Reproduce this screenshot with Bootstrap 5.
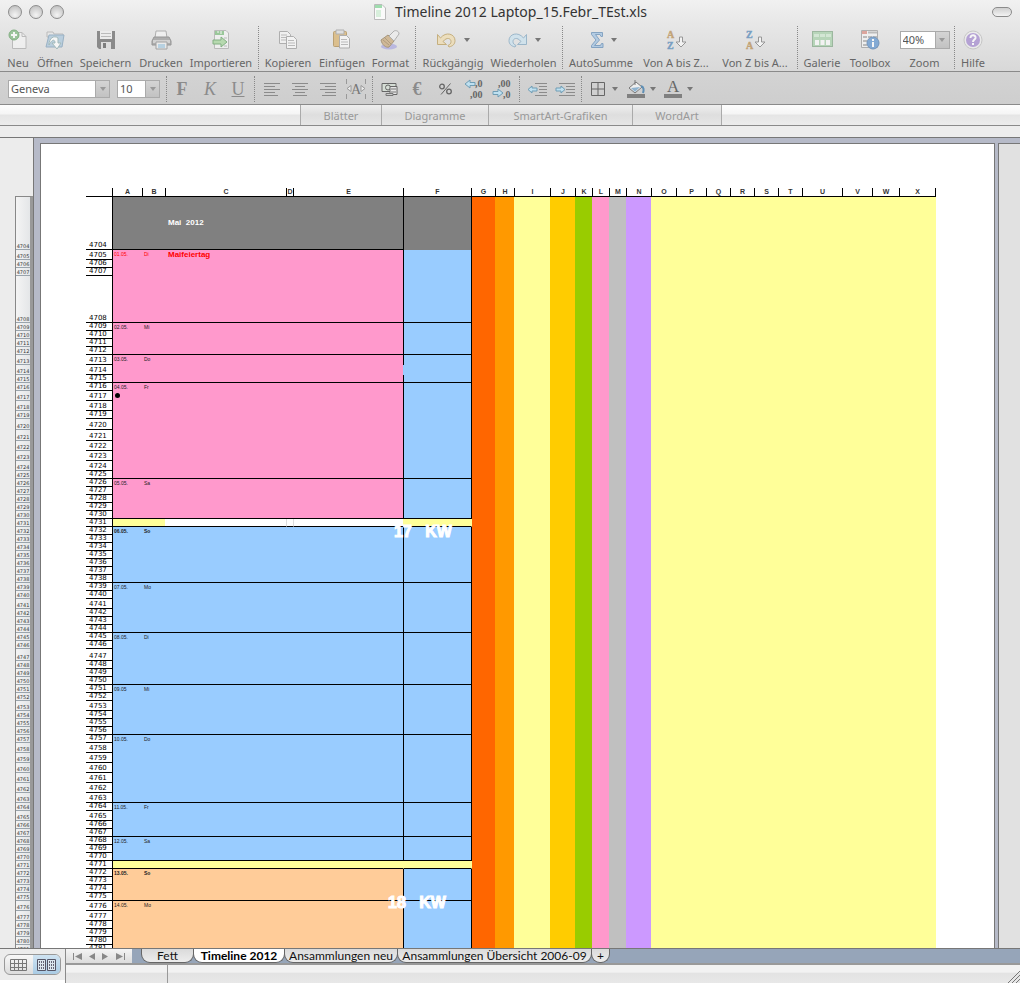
<!DOCTYPE html>
<html lang="de">
<head>
<meta charset="utf-8">
<meta name="viewport" content="width=device-width, initial-scale=1">
<title>Timeline 2012 Laptop_15.Febr_TEst.xls</title>
<link rel="stylesheet" href="https://cdn.jsdelivr.net/npm/bootstrap@5.3.0/dist/css/bootstrap.min.css">
<style>
body{font-family:"Noto Sans","Open Sans",sans-serif;font-size:11px;line-height:14px;color:#555;background:#ececec;overflow:hidden}
button{background:none;border:0;padding:0;color:inherit;font:inherit}
svg{display:block;overflow:visible}
.topbar{background:linear-gradient(#f1f1f1,#e8e8e8 30%,#d8d8d8);border-bottom:1px solid #8a8a8a;height:72px}
.titlebar{height:23px;padding:0 8px}
.light{width:14px;height:14px;border-radius:7px;border:1px solid #8d8d8d;background:radial-gradient(circle at 50% 75%,#f4f4f4,#b9b9b9)}
.pill{width:20px;height:10px;border-radius:5px;border:1px solid #8b8b8b;background:linear-gradient(#cfcfcf,#f3f3f3)}
.doc-title{font-size:14px;color:#333}
.tools{display:grid;height:48px;justify-content:start;
grid-template-columns:36px 38px 63px 48px 72px 3px 56px 52px 45px 4px 72px 69px 8px 70px 80px 78px 6px 44px 52px 57px 3px 34px}
.tool{display:flex;flex-direction:column;align-items:center;white-space:nowrap;color:#666}
.tool .pic{height:33px;display:flex;align-items:center;gap:7px}
.tool .pic svg{opacity:.7}
.split{justify-self:center;border-left:1px dotted #888;width:1px}
.tools .split{height:43px;margin-top:3px}
.arrow{border:3px solid transparent;border-top:4px solid #777;border-bottom:0;width:0;height:0;flex:none}
.formats{height:33px;background:linear-gradient(#d3d3d3,#cecece);border-bottom:1px solid #8a8a8a;padding:2px 0 0 8px;gap:7px}
.combo{display:flex;height:18px;border:1px solid #aaa}
.combo input{border:0;padding:0 2px;min-width:0;font-size:11px;line-height:16px;color:#555;background:#fff;border-radius:0}
.combo button{width:14px;background:linear-gradient(#d4d4d4,#c2c2c2);border-left:1px solid #aaa;display:flex;align-items:center;justify-content:center;flex:none}
.combo .arrow{border-top-color:#999}
.family{width:102px}.size{width:43px}.zoomer{width:50px}
.fbtns{display:grid;align-items:center;grid-template-columns:4px 28px 28px 28px 5px 29px 28px 28px 28px 5px 28px 28px 28px 29px 28px 7px 28px 28px 5px 28px 10px 28px 9px 28px 9px;height:30px;margin-left:-3px}
.fbtns button{display:flex;justify-content:center;align-items:center}
.fbtns .split{height:26px}
.letter{font-family:"Liberation Serif",serif;font-size:18px;line-height:20px;color:#8b8b8b}
.ribbon{height:21px;background:linear-gradient(#fdfdfd 0,#f5f5f5 45%,#e5e5e5 50%,#ececec);border-bottom:1px solid #8a8a8a;padding-left:300px}
.ribbon a{display:block;color:#999;text-decoration:none;text-align:center;line-height:21px;border-left:1px solid #aaa;background:linear-gradient(#eee,#dedede 50%,#e6e6e6)}
.ribbon a:last-child{border-right:1px solid #aaa}
.r1{width:81px}.r2{width:107px}.r3{width:144px}.r4{width:90px}
.strip{height:11px;background:#ededed}
.work{border-top:1px solid #777;min-height:0}
.gutter{width:34px;background:#ececec;border-right:1px solid #777;padding:59px 0 0 15px}
.scale{width:18px;border:1px solid #888;border-right:3px solid #999;background:linear-gradient(90deg,#f4f4f4,#e4e6e8);margin-top:-1px;padding:0}
.scale div{border-bottom:1px solid #9aa4ac;display:flex;align-items:flex-end;justify-content:center;font:5px/6px "DejaVu Sans",sans-serif;color:#333}
.desk{background:#b6bac8;padding:5px 0 0 6px;gap:3px;min-width:0}
.paper{background:#fff;border:1px solid #777;border-bottom:0;padding:44px 0 0 45px;overflow:hidden;min-width:0}
.nextpaper{width:22px;background:#e1e1e1;border:1px solid #777;border-bottom:0;border-right:0;flex:none}
.sheet{border-collapse:separate;border-spacing:0;table-layout:fixed;width:850px;color:#222}
.sheet th,.sheet td{padding:0;line-height:7px;overflow:hidden;white-space:nowrap}
.sheet thead th{height:9px;font:700 7px/8px "Liberation Sans",sans-serif;text-align:center;border-bottom:1px solid #000;border-left:1px solid #000;color:#333}
.sheet thead td{border-bottom:1px solid #000}
.sheet thead th.fcol,.sheet thead th:last-child{border-right:1px solid #000}
.sheet thead th.gcol{border-left:0}
.sheet tbody th{font:400 7px/7px "DejaVu Sans",sans-serif;vertical-align:bottom;border-bottom:1px solid #000;padding-left:3px;color:#000}
.sheet tbody td{vertical-align:top;font:400 5px/8px "Liberation Sans",sans-serif;padding-left:1px}
.sheet tbody td.day{padding-left:2px}
.sheet tbody td.date{border-left:1px solid #000}
.sheet tbody td.fcol{border-left:1px solid #000;border-right:1px solid #000;position:relative;overflow:visible}
.sheet tbody td.ruled{border-bottom:1px solid #000}
.sheet tbody td.open{border-left-color:transparent}
.sheet tbody td.gap{border-left-color:transparent;border-right-color:transparent}
.sheet tbody td.hair{border-left:1px solid #ddd}
.sheet tbody td.note{padding-left:3px;font:700 8px/10px "Liberation Sans",sans-serif}
.grey{background:#808080}.pink{background:#f9c}.sky{background:#9cf}.peach{background:#fc9}.lemon{background:#ff9}
.flame{background:#f60}.orange{background:#f90}.gold{background:#fc0}.leaf{background:#9c0}.silver{background:#c0c0c0}.violet{background:#c9f}
.sheet tbody td.note.head{color:#fff;vertical-align:middle}
.holiday,.sheet tbody td.holiday{color:#f00}
.sunday{font-weight:700!important}
.dot{display:block;width:5px;height:5px;border-radius:3px;background:#000;margin:2px 0 0 1px}
.week{position:absolute;z-index:2;left:-10px;top:4px;font:700 16px/18px "Liberation Sans",sans-serif;color:#fff;-webkit-text-stroke:1px #fff;white-space:pre}
.week.low{left:-16px;top:1px}
.foot{height:35px;border-top:1px solid #777}
.views{width:66px;border-right:1px solid #8a8a8a;background:linear-gradient(#ececec 90%,#fff 90%);padding:5px 0 0 4px}
.viewpill{display:flex;width:57px;height:21px;border:1px solid #999;border-radius:6px;overflow:hidden;background:linear-gradient(#f8f8f8,#dcdcdc)}
.viewpill button{flex:1;display:flex;align-items:center;justify-content:center}
.viewpill .on{background:linear-gradient(#cfe3f2,#a9cbe4)}
.sheets{height:16px;background:#96a5b9;border-bottom:2px solid #999}
.steps{width:66px;background:linear-gradient(#f4f4f4,#dcdcdc);display:flex;align-items:center;justify-content:space-around;padding:0 4px;margin-right:9px}
.steps button{color:#888;line-height:10px}
.tab{display:block;height:14px;border-radius:0 0 9px 9px;border:1px solid #666;border-top:0;background:linear-gradient(#dadada,#ededed);color:#111;text-decoration:none;text-align:center;font:400 12px/13px Lato,sans-serif;margin-right:-1px;white-space:nowrap}
.tab.active{background:#fff;font-weight:700;color:#000;position:relative}
.t1{width:53px}.t2{width:92px}.t3{width:114px}.t4{width:195px}.t5{width:19px}
.status{background:linear-gradient(#f2f2f2 40%,#e3e3e3 45%,#e8e8e8)}
.status .cell{width:102px;border-right:1px solid #999}
</style>
</head>
<body class="vh-100 d-flex flex-column">
<header class="topbar">
  <div class="titlebar d-flex align-items-center">
    <div class="d-flex col" style="gap:7px"><span class="light"></span><span class="light"></span><span class="light"></span></div>
    <div class="doc-title d-flex align-items-center gap-2">
      <svg width="14" height="18" viewBox="0 0 14 18"><path d="M1.500 1.500H9L12.500 5v11.500h-11z" fill="#fafafa" stroke="#bbb"/><path d="M2 2h7v3H2z" fill="#9fdcae"/><path d="M3 7h5v7H3z" fill="#d8efdc"/></svg>
      <span>Timeline 2012 Laptop_15.Febr_TEst.xls</span>
    </div>
    <div class="col d-flex justify-content-end"><span class="pill"></span></div>
  </div>
  <nav class="tools" aria-label="Standard">
    <button class="tool"><span class="pic"><svg width="20" height="22" viewBox="0 0 20 22"><path d="M4.500 3.500H14l4 4v12H4.500z" fill="#f5f5f5" stroke="#aaa"/><path d="M14 3.500v4h4" fill="none" stroke="#aaa"/><circle cx="6" cy="6" r="5" fill="#7fb87f" stroke="#5c9b5c"/><path d="M6 3v6M3 6h6" stroke="#fff" stroke-width="2"/></svg></span>Neu</button>
    <button class="tool"><span class="pic"><svg width="21" height="22" viewBox="0 0 21 22"><path d="M2 3h6l1 2h9v3H2z" fill="#e8e8e8" stroke="#aaa"/><path d="M1 18L4 6h15l-2 12z" fill="#a9c6dc" stroke="#7b9db8"/><path d="M4 16C4 9 9 6 13 9v5h3l-4 6-5-6h3c0-4-3-4-6 2z" fill="#fff" stroke="#8aa"/></svg></span>Öffnen</button>
    <button class="tool"><span class="pic"><svg width="20" height="20" viewBox="0 0 20 20"><path d="M1 1h18v18H3l-2-2z" fill="#666"/><path d="M4 1h12v8H4z" fill="#f0f0f0"/><path d="M5 3.500h10M5 6.500h10" stroke="#aaa"/><path d="M5 12h10v7H5z" fill="#ddd"/><path d="M7 13h3v5H7z" fill="#555"/></svg></span>Speichern</button>
    <button class="tool"><span class="pic"><svg width="21" height="20" viewBox="0 0 21 20"><path d="M5 1h10l1 7H4z" fill="#f4f4f4" stroke="#999"/><path d="M3 7h15l2 4v4H1v-4z" fill="#999" stroke="#777"/><path d="M2 10h17v3H2z" fill="#ccc"/><path d="M5 12h11v7H5z" fill="#eee" stroke="#888"/><path d="M7 14h7v4H7z" fill="#a7cbe2"/></svg></span>Drucken</button>
    <button class="tool"><span class="pic"><svg width="18" height="21" viewBox="0 0 18 21"><path d="M2.500 1.500H14l2.500 2.500v15.500h-14z" fill="#f4f4f4" stroke="#aaa"/><path d="M3 2h9v4H3z" fill="#7cbc7c"/><path d="M6 2v2M9 2v3" stroke="#fff"/><path d="M1 11h8V8l6 5-6 5v-3H1z" fill="#a5d69a" stroke="#5c9b5c"/><path d="M12 9h3M12 17h3" stroke="#aaa"/></svg></span>Importieren</button>
    <i class="split"></i>
    <button class="tool"><span class="pic"><svg width="20" height="20" viewBox="0 0 20 20"><path d="M1.500 1.500h8l3 3v9h-11z" fill="#f6f6f6" stroke="#999"/><path d="M3 5h6M3 7.500h6M3 10h5" stroke="#aaa"/><path d="M8.500 6.500h7l3 3v9h-10z" fill="#fafafa" stroke="#999"/><path d="M10 10.500h6M10 13h7M10 15.500h7" stroke="#aaa"/></svg></span>Kopieren</button>
    <button class="tool"><span class="pic"><svg width="20" height="21" viewBox="0 0 20 21"><rect x="1.500" y="2.500" width="13" height="15" rx="1" fill="#d9b16a" stroke="#a98545"/><path d="M4 1h8v4H4z" fill="#ddd" stroke="#999"/><path d="M7.500 6.500h7l3 3v9.500h-10z" fill="#fafafa" stroke="#999"/><path d="M9 10.500h6M9 13h7M9 15.500h7" stroke="#aaa"/></svg></span>Einfügen</button>
    <button class="tool"><span class="pic"><svg width="21" height="20" viewBox="0 0 21 20"><ellipse cx="9" cy="16.500" rx="8" ry="3" fill="#aaa8e0"/><path d="M1 10l7-5 6 6-5 6c-3 1-7-2-8-7z" fill="#c9a878" stroke="#8e7650"/><path d="M3 10l6 5M5 8l6 6" stroke="#9b7f55"/><path d="M9 6l5-5c2-1 5 0 5 3l-5 7z" fill="#eee" stroke="#999"/></svg></span>Format</button>
    <i class="split"></i>
    <button class="tool"><span class="pic"><svg width="21" height="16" viewBox="0 0 21 16"><path d="M1.500 2.500v10h9L7 9.500c4-5 8-3 8 0 0 2-1 3-3 4l1 1.500c4-1 6-3 6-6.500C19 2 10-1 4.500 6z" fill="#f0dcae" stroke="#b99a55"/></svg><i class="arrow"></i></span>Rückgängig</button>
    <button class="tool"><span class="pic"><svg width="21" height="16" viewBox="0 0 21 16"><path d="M19.500 2.500v10h-9L14 9.500c-4-5-8-3-8 0 0 2 1 3 3 4L8 15c-4-1-6-3-6-6.500C2 2 11-1 16.500 6z" fill="#c9e2f0" stroke="#7da4bf"/></svg><i class="arrow"></i></span>Wiederholen</button>
    <i class="split"></i>
    <button class="tool"><span class="pic ps-1"><svg width="14" height="18" viewBox="0 0 14 18"><path d="M1.500 1.500h11v4h-1.500l-1-2H5.500L9.500 9l-5 5.500h6l1-2H13v4H1.500v-2L6 9 1.500 3.500z" fill="#9fc2e3" stroke="#5d89b5"/></svg><i class="arrow"></i></span>AutoSumme</button>
    <button class="tool"><span class="pic"><svg width="21" height="22" viewBox="0 0 21 22"><g font-family="Liberation Serif,serif" font-weight="700" font-size="10" stroke-width=".4"><text x="1" y="9" fill="#b5894a" stroke="#b5894a">A</text><text x="1" y="20" fill="#4b82b5" stroke="#4b82b5">Z</text></g><path d="M13.500 8h3v5h3.500l-5 5-5-5h3.500z" fill="#fafafa" stroke="#777"/></svg></span>Von A bis Z...</button>
    <button class="tool"><span class="pic"><svg width="21" height="22" viewBox="0 0 21 22"><g font-family="Liberation Serif,serif" font-weight="700" font-size="10" stroke-width=".4"><text x="1" y="9" fill="#4b82b5" stroke="#4b82b5">Z</text><text x="1" y="20" fill="#b5894a" stroke="#b5894a">A</text></g><path d="M13.500 8h3v5h3.500l-5 5-5-5h3.500z" fill="#fafafa" stroke="#777"/></svg></span>Von Z bis A...</button>
    <i class="split"></i>
    <button class="tool"><span class="pic"><svg width="21" height="18" viewBox="0 0 21 18"><rect x=".5" y=".5" width="20" height="15" fill="#a5d0a8" stroke="#7fa583"/><path d="M2 3h5v3H2zM8 3h5v3H8zM14 3h5v3h-5z" fill="#cde8cf"/><path d="M3 9h4v5H3zM8.500 9h4v5h-4zM14 9h4v5h-4z" fill="#fafafa"/></svg></span>Galerie</button>
    <button class="tool"><span class="pic"><svg width="20" height="21" viewBox="0 0 20 21"><path d="M1.500 1.500h16v17h-16z" fill="#f4f4f4" stroke="#999"/><path d="M2 2h5v3H2z" fill="#d98b80"/><path d="M8 3.500h9M3 8h4M8 8h4M13 8h4M3 12h4M3 16h4" stroke="#aaa" stroke-width="2"/><circle cx="13" cy="14" r="6" fill="#5c93cf" stroke="#4676ac"/><path d="M13 10v2M13 13v5" stroke="#fff" stroke-width="2"/></svg></span>Toolbox</button>
    <div class="tool"><span class="pic"><span class="combo zoomer"><input class="w-100" id="zoom" value="40%"><button aria-label="Zoomstufen"><i class="arrow"></i></button></span></span><label for="zoom">Zoom</label></div>
    <i class="split"></i>
    <button class="tool"><span class="pic"><svg width="20" height="20" viewBox="0 0 20 20"><circle cx="10" cy="10" r="9" fill="#eee" stroke="#bbb"/><circle cx="10" cy="10" r="7" fill="#a287cf"/><path d="M7.500 8c0-4 5.500-3.500 5 0-.3 1.500-2.500 1.800-2.500 4M10 13v2" fill="none" stroke="#fff" stroke-width="2"/></svg></span>Hilfe</button>
  </nav>
</header>

<div class="formats d-flex align-items-center">
  <div class="combo family"><input class="w-100" aria-label="Schriftart" value="Geneva"><button aria-label="Schriftarten"><i class="arrow"></i></button></div>
  <div class="combo size"><input class="w-100" aria-label="Schriftgrad" value="10"><button aria-label="Schriftgrade"><i class="arrow"></i></button></div>
  <div class="fbtns">
    <i class="split"></i>
    <button class="letter fw-bold">F</button>
    <button class="letter fst-italic">K</button>
    <button class="letter text-decoration-underline">U</button>
    <i class="split"></i>
    <button aria-label="Links"><svg width="16" height="15"><path d="M0 1.500h16M0 4.500h11M0 7.500h16M0 10.500h11M0 13.500h14" stroke="#8b8b8b"/></svg></button>
    <button aria-label="Zentriert"><svg width="16" height="15"><path d="M0 1.500h16M3 4.500h10M0 7.500h16M3 10.500h10M1 13.500h14" stroke="#8b8b8b"/></svg></button>
    <button aria-label="Rechts"><svg width="16" height="15"><path d="M0 1.500h16M5 4.500h11M0 7.500h16M5 10.500h11M2 13.500h14" stroke="#8b8b8b"/></svg></button>
    <button aria-label="Verbinden"><svg width="20" height="20" viewBox="0 0 20 20"><path d="M.5 0v5M.5 15v5M19.500 0v5M19.500 15v5" stroke="#999"/><path d="M1 9.500l4-3v6zM19 9.500l-4-3v6z" fill="#eee" stroke="#999"/><text x="5" y="15" font-family="Liberation Serif,serif" font-size="14" fill="#777">A</text></svg></button>
    <i class="split"></i>
    <button aria-label="Währung"><svg width="17" height="15" viewBox="0 0 17 15"><path d="M1 1.500h14v8H1z" fill="#d5ddd5" stroke="#666"/><circle cx="7" cy="5.500" r="2.500" fill="none" stroke="#666"/><path d="M9 4.500h7v8H9z" fill="#e5e5e5" stroke="#666"/><path d="M10 7h5M10 10h5M5 11.500h7v2H5z" stroke="#777" fill="#ccc"/></svg></button>
    <button class="letter fw-bold">€</button>
    <button aria-label="Prozent"><svg width="13" height="12" viewBox="0 0 13 12"><path d="M11.500.5L2 11.500" stroke="#666"/><circle cx="3" cy="3.500" r="2.300" fill="none" stroke="#666" stroke-width="1.300"/><circle cx="10" cy="8.500" r="2.300" fill="none" stroke="#666" stroke-width="1.300"/></svg></button>
    <button aria-label="Dezimalstelle hinzufügen"><svg width="20" height="20" viewBox="0 0 20 20"><path d="M1 5l5-4v2.500h5v3H6V9z" fill="#bfe0f0" stroke="#6f9db5"/><g font-family="Liberation Serif,serif" font-size="10" font-weight="700" fill="#666"><text x="11" y="8">,0</text><text x="6" y="19">,00</text></g></svg></button>
    <button aria-label="Dezimalstelle löschen"><svg width="20" height="20" viewBox="0 0 20 20"><path d="M11 14l-5-4v2.500H1v3h5V18z" fill="#bfe0f0" stroke="#6f9db5"/><g font-family="Liberation Serif,serif" font-size="10" font-weight="700" fill="#666"><text x="6" y="8">,00</text><text x="11" y="19">,0</text></g></svg></button>
    <i class="split"></i>
    <button aria-label="Einzug verkleinern"><svg width="21" height="15"><path d="M8 1.500h12M12 4.500h8M12 7.500h8M12 10.500h8M8 13.500h12" stroke="#8b8b8b"/><path d="M1 7.500l4-3.500v2h5v3H5v2z" fill="#bfe0f0" stroke="#6f9db5"/></svg></button>
    <button aria-label="Einzug vergrößern"><svg width="21" height="15"><path d="M4 1.500h16M11 4.500h9M11 7.500h9M11 10.500h9M4 13.500h16" stroke="#8b8b8b"/><path d="M10 7.500L6 4v2H1v3h5v2z" fill="#bfe0f0" stroke="#6f9db5"/></svg></button>
    <i class="split"></i>
    <button aria-label="Rahmen"><svg width="14" height="14"><path d="M.5 .5h13v13H.5zM7 0v14M0 7h14" fill="none" stroke="#666"/></svg></button>
    <i class="arrow"></i>
    <button aria-label="Füllfarbe"><svg width="18" height="18" viewBox="0 0 18 18"><path d="M0 14h18v4H0z" fill="#808080"/><path d="M2 8l7-6 6 5-7 6z" fill="#eee" stroke="#777"/><path d="M4 8l9-1-5 5z" fill="#8fb3cf"/><path d="M14 6c3 1 3 4 2 7" fill="none" stroke="#5f8fb5" stroke-width="2"/><path d="M8 0v5" stroke="#777"/></svg></button>
    <i class="arrow"></i>
    <button aria-label="Schriftfarbe"><svg width="18" height="18" viewBox="0 0 18 18"><path d="M0 14h18v4H0z" fill="#808080"/><text x="3" y="12" font-family="Liberation Serif,serif" font-size="17" fill="#666">A</text></svg></button>
    <i class="arrow"></i>
  </div>
</div>
<nav class="ribbon d-flex" aria-label="Elemente">
  <a class="r1" href="#">Blätter</a><a class="r2" href="#">Diagramme</a><a class="r3" href="#">SmartArt-Grafiken</a><a class="r4" href="#">WordArt</a>
</nav>
<div class="strip"></div>

<main class="work d-flex flex-grow-1 overflow-hidden">
  <div class="gutter flex-shrink-0"><div class="scale" id="scale"></div></div>
  <div class="desk d-flex flex-grow-1">
    <div class="paper flex-grow-1">
      <table class="sheet"><colgroup id="cols"></colgroup><thead><tr id="letters"></tr></thead><tbody id="rows"></tbody></table>
    </div>
    <div class="nextpaper"></div>
  </div>
</main>

<footer class="foot d-flex flex-shrink-0">
  <div class="views flex-shrink-0"><div class="viewpill">
    <button aria-label="Normal"><svg width="17" height="12"><path d="M.5 .5h16v11H.5zM4.500 0v12M8.500 0v12M12.500 0v12M0 4.500h17M0 8.500h17" fill="none" stroke="#777"/></svg></button>
    <button class="on" aria-label="Seitenlayout"><svg width="19" height="12"><path d="M.5 .5h8v11h-8zM10.500 .5h8v11h-8z" fill="#dbe6ee" stroke="#556"/><path d="M2 3h5M2 6h5M2 9h5M12 3h5M12 6h5M12 9h5" stroke="#667" stroke-dasharray="1 1" stroke-width="2"/></svg></button>
  </div></div>
  <div class="d-flex flex-column flex-grow-1">
    <nav class="sheets d-flex" aria-label="Blätter">
      <div class="steps">
        <button aria-label="Erstes Blatt"><svg width="9" height="7"><path d="M9 0v7L2 3.500z" fill="#888"/><path d="M.5 0v7" stroke="#888"/></svg></button>
        <button aria-label="Vorheriges Blatt"><svg width="7" height="7"><path d="M6 0v7L0 3.500z" fill="#888"/></svg></button>
        <button aria-label="Nächstes Blatt"><svg width="7" height="7"><path d="M0 0v7l6-3.500z" fill="#888"/></svg></button>
        <button aria-label="Letztes Blatt"><svg width="9" height="7"><path d="M0 0v7l7-3.500z" fill="#888"/><path d="M8.500 0v7" stroke="#888"/></svg></button>
      </div>
      <a class="tab t1" href="#">Fett</a><a class="tab t2 active" href="#">Timeline 2012</a><a class="tab t3" href="#">Ansammlungen neu</a><a class="tab t4" href="#">Ansammlungen Übersicht 2006-09</a><a class="tab t5" href="#">+</a>
    </nav>
    <div class="status d-flex flex-grow-1"><div class="cell"></div>
      <svg class="ms-auto mt-auto" width="13" height="13"><path d="M1 13L13 1M5 13l8-8M9 13l4-4" stroke="#777"/></svg></div>
  </div>
</footer>

<script src="https://cdn.jsdelivr.net/npm/bootstrap@5.3.0/dist/js/bootstrap.bundle.min.js"></script>
<script>
const columns = {'':26,A:30,B:23,C:121,D:7,E:110,F:69,G:23,H:19,I:36,J:25,K:17,L:17,M:17,N:25,O:25,P:30,Q:24,R:24,S:24,T:24,U:40,V:30,W:27,X:37};
const first = 4704;
const heights = [53,10,8,8,47,8,8,8,8,10,10,8,8,10,10,8,11,11,10,10,10,8,8,8,8,8,8,8,8,8,8,8,8,8,8,8,8,
  10,8,8,8,8,8,12,8,8,8,8,8,10,8,8,8,8,10,10,10,10,10,10,8,10,8,8,8,8,8,8,8,8,8,8,10,10,8,8,8,8,8,8];
const days = {4705:['01.05.','Di'],4709:['02.05.','Mi'],4713:['03.05.','Do'],4716:['04.05.','Fr'],4726:['05.05.','Sa'],4732:['06.05.','So'],
  4739:['07.05.','Mo'],4745:['08.05.','Di'],4751:['09.05','Mi'],4757:['10.05.','Do'],4764:['11.05.','Fr'],4768:['12.05.','Sa'],4772:['13.05.','So'],4776:['14.05.','Mo']};
const ruled = new Set([4704,4708,4712,4715,4725,4730,4731,4738,4744,4750,4756,4763,4767,4770,4771,4775]);
const notes = {4704:'Mai&nbsp; 2012',4705:'Maifeiertag'};
const weeks = {4731:'<span class="week">17   KW</span>',4775:'<span class="week low">18   KW</span>'};
const bands = ['flame','orange','lemon','gold','leaf','pink','silver','violet'];
const fill = n => n === 4704 ? 'grey' : n < 4731 ? 'pink' : n < 4771 ? 'sky' : n === 4771 ? 'lemon' : 'peach';

document.getElementById('cols').innerHTML = Object.values(columns).map(w => `<col style="width:${w}px">`).join('');
document.getElementById('letters').innerHTML = Object.keys(columns).map(c => c ? `<th scope="col" class="${c.toLowerCase()}col">${c}</th>` : '<td></td>').join('');
document.getElementById('scale').innerHTML = heights.map((h, i) => `<div style="height:${h}px">${first + i}</div>`).join('');
document.getElementById('rows').innerHTML = heights.map((h, i) => {
  const n = first + i, [date, day] = days[n] || ['', ''];
  const rule = ruled.has(n) ? ' ruled' : '', f = fill(n) + rule;
  const tone = n === 4705 ? ' holiday' : day === 'So' ? ' sunday' : '';
  const split = n === 4731, ab = split ? 'lemon' + rule : f, ce = split ? rule : f;
  const fcol = n === 4704 ? 'grey' : (split || n === 4771) ? 'lemon gap' + rule : 'sky' + (n === 4714 ? ' open' : '') + rule;
  return `<tr style="height:${h}px"><th scope="row">${n}</th>` +
    `<td class="date ${ab}${tone}">${n === 4717 ? '<i class="dot"></i>' : date}</td><td class="day ${ab}${tone}">${day}</td>` +
    `<td class="${ce}${notes[n] ? ' note' : ''}${n === 4704 ? ' head' : tone}">${notes[n] || ''}</td>` +
    `<td class="${ce}${split ? ' hair' : ''}"></td><td class="${ce}${split ? ' hair' : ''}"></td><td class="fcol ${fcol}">${weeks[n] || ''}</td>` +
    (i ? '' : bands.map(b => `<td class="${b}" rowspan="${heights.length}"></td>`).join('') + `<td class="lemon" colspan="10" rowspan="${heights.length}"></td>`) + '</tr>';
}).join('');
</script>
</body>
</html>
